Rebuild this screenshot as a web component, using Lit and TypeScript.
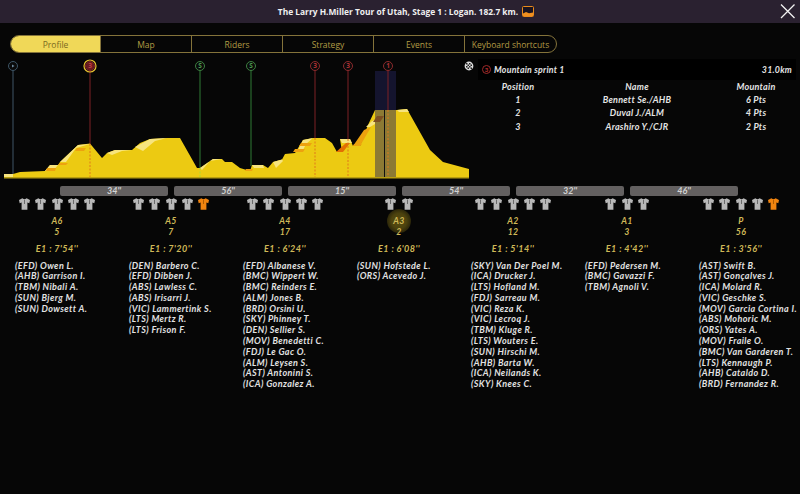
import { LitElement, html, css, svg } from "lit";
import { customElement } from "lit/decorators.js";

const TABS = ["Profile", "Map", "Riders", "Strategy", "Events", "Keyboard shortcuts"];
const GAPS = ["34''", "56''", "15''", "54''", "32''", "46''"];

interface Group { label: string; count: number; time: string; shirts: number; orange?: boolean; glow?: boolean; names: string[]; }

const GROUPS: Group[] = [
  { label: "A6", count: 5, time: "E1 : 7'54''", shirts: 5, names: ["(EFD) Owen L.", "(AHB) Garrison I.", "(TBM) Nibali A.", "(SUN) Bjerg M.", "(SUN) Dowsett A."] },
  { label: "A5", count: 7, time: "E1 : 7'20''", shirts: 4, orange: true, names: ["(DEN) Barbero C.", "(EFD) Dibben J.", "(ABS) Lawless C.", "(ABS) Irisarri J.", "(VIC) Lammertink S.", "(LTS) Mertz R.", "(LTS) Frison F."] },
  { label: "A4", count: 17, time: "E1 : 6'24''", shirts: 5, names: ["(EFD) Albanese V.", "(BMC) Wippert W.", "(BMC) Reinders E.", "(ALM) Jones B.", "(BRD) Orsini U.", "(SKY) Phinney T.", "(DEN) Sellier S.", "(MOV) Benedetti C.", "(FDJ) Le Gac O.", "(ALM) Leysen S.", "(AST) Antonini S.", "(ICA) Gonzalez A."] },
  { label: "A3", count: 2, time: "E1 : 6'08''", shirts: 2, glow: true, names: ["(SUN) Hofstede L.", "(ORS) Acevedo J."] },
  { label: "A2", count: 12, time: "E1 : 5'14''", shirts: 5, names: ["(SKY) Van Der Poel M.", "(ICA) Drucker J.", "(LTS) Hofland M.", "(FDJ) Sarreau M.", "(VIC) Reza K.", "(VIC) Lecroq J.", "(TBM) Kluge R.", "(LTS) Wouters E.", "(SUN) Hirschi M.", "(AHB) Barta W.", "(ICA) Neilands K.", "(SKY) Knees C."] },
  { label: "A1", count: 3, time: "E1 : 4'42''", shirts: 3, names: ["(EFD) Pedersen M.", "(BMC) Gavazzi F.", "(TBM) Agnoli V."] },
  { label: "P", count: 56, time: "E1 : 3'56''", shirts: 4, orange: true, names: ["(AST) Swift B.", "(AST) Gonçalves J.", "(ICA) Molard R.", "(VIC) Geschke S.", "(MOV) Garcia Cortina I.", "(ABS) Mohoric M.", "(ORS) Yates A.", "(MOV) Fraile O.", "(BMC) Van Garderen T.", "(LTS) Kennaugh P.", "(AHB) Cataldo D.", "(BRD) Fernandez R."] },
];

const RESULTS = [
  ["1", "Bennett Se./AHB", "6 Pts"],
  ["2", "Duval J./ALM", "4 Pts"],
  ["3", "Arashiro Y./CJR", "2 Pts"],
];

const PROFILE = "M4 177 L4 174 L13 174 L20 172 L45 171 L50 165 L58 165 L60 162 L78 145 L90 143.5 L102 158 L107 153 L115 150 L132 150 L140 143 L150 139 L167 138 L180 138 L197 168 L200 168 L213 159 L222 159 L225 162 L232 162 L240 168 L250 171 L252 165 L263 165 L268 168 L273 162 L282 159.5 L285 154 L295 153 L303 140 L313 138 L325 138 L332 143 L337 152 L342 152 L340 139 L350 139 L353 146 L360 146 L368 125 L375 110 L397 110 L407 109 L430 150 L443 162 L469 169 L469 177 Z";

const LIGHT = [
  "4,174 13,174 13,177 4,177",
  "45,171 50,165 58,165 53,171",
  "60,162 78,145 90,144 76,148 66,162",
  "107,153 115,150 132,150 122,151 112,155",
  "135,147 150,139 167,138 155,141 143,151",
  "200,168 213,159 222,159 210,161 202,170",
  "252,165 263,165 264,168 254,168",
  "273,162 282,159.5 283,161 276,168",
  "298,150 303,140 313,138 306,144 303,150",
  "340,139 350,139 352,143 342,143",
  "366,127 372,121 375,120 375,124 370,127",
  "397,110 407,109 409,112 399,112",
];
const ORANGE = [
  "47,168 56,168 55,171 46,171",
  "60,163 68,163 66,165 58,165",
  "77,148 86,148 84,151 75,151",
  "301,143 312,143 310,146 299,146",
  "295,149 305,149 303,152 293,152",
  "246,169 253,169 252,171 245,171",
  "353,146 364,130 371,127 360,146",
  "354,144 362,144 360,146 353,146",
];
const DARK_ORANGE = ["336,152 346,143 350,143 343,152 338,152"];

interface Marker { x: number; kind: "start" | "mtn" | "sprint"; text: string; }
const MARKERS: Marker[] = [
  { x: 13, kind: "start", text: "" },
  { x: 90, kind: "mtn", text: "3" },
  { x: 200, kind: "sprint", text: "S" },
  { x: 251, kind: "sprint", text: "S" },
  { x: 315, kind: "mtn", text: "3" },
  { x: 348, kind: "mtn", text: "3" },
  { x: 388, kind: "mtn", text: "1" },
];
const COLORS = { start: "#3e5566", mtn: "#7c2024", sprint: "#2f7a35" };
const SURFACE_Y: Record<number, number> = { 13: 174, 90: 144, 200: 168, 251: 166, 315: 138, 348: 139, 388: 110 };

@customElement("app-root")
export class AppRoot extends LitElement {
  static styles = css`
    :host { display: block; width: 800px; height: 494px; background: #060606; overflow: hidden; font-family: "Open Sans", sans-serif; color: #e8e8e8; }
    .top { height: 23px; background: #2a2130; display: grid; grid-template-columns: 1fr auto 1fr; align-items: center; }
    .title { margin-left: 12px; font-size: 8.4px; font-weight: 700; color: #f0f0f0; display: flex; align-items: center; gap: 4px; white-space: nowrap; }
    .close { justify-self: end; margin-right: 4px; display: block; }
    .tabs { display: flex; width: 547px; height: 18px; margin: 12px 0 0 10px; box-sizing: border-box; border: 1px solid #84733a; border-radius: 9px; overflow: hidden; }
    .tab { flex: 0 0 91px; box-sizing: border-box; display: flex; align-items: center; justify-content: center; font-size: 8.5px; color: #b29c45; border-left: 1px solid #84733a; white-space: nowrap; }
    .tab:first-child { flex-basis: 89px; border-left: 0; background: #f0d858; color: #7a6a20; }
    .tab:last-child { flex: 1; }
    .middle { display: flex; height: 129px; margin-top: 3px; }
    .profile { display: block; flex: none; }
    .info { width: 318px; margin: 3px 0 0 3px; font-family: Lato, sans-serif; font-style: italic; font-weight: 700; font-size: 9px; letter-spacing: 0.25px; color: #e4e4e4; }
    .info-head { height: 21px; background: #000; display: flex; align-items: center; justify-content: space-between; padding: 0 4px; font-size: 8.75px; }
    .info-name { display: flex; align-items: center; gap: 3px; }
    .badge { width: 9px; height: 9px; box-sizing: border-box; border: 1px solid #a02a2a; border-radius: 50%; color: #c03030; font-size: 6px; line-height: 7px; text-align: center; font-style: normal; letter-spacing: 0; }
    .grid { display: grid; grid-template-columns: 80px 158px 80px; grid-auto-rows: 13.2px; text-align: center; align-items: center; }
    .bars { display: flex; gap: 6px; padding-left: 60px; margin-top: 1px; }
    .bar { width: 108px; height: 10px; background: #636060; border-radius: 2px; font-family: Lato, sans-serif; font-size: 9px; font-style: italic; font-weight: 700; line-height: 10px; text-align: center; color: #d2d2d2; }
    .cols { display: grid; grid-template-columns: repeat(7, 114px); margin-top: 1px; }
    .col { display: flex; flex-direction: column; }
    .shirts { display: flex; justify-content: center; gap: 5.3px; height: 14px; align-items: center; }
    .shirt { display: block; width: 11px; height: 12px; fill: #b8b8b8; }
    .shirt.orange { fill: #f08410; }
    .shirt .seam { stroke: #6a6a6a; stroke-width: 1; fill: none; }
    .shirt.orange .seam { stroke: #b05c00; }
    .lab { position: relative; z-index: 1; font-family: Lato, sans-serif; color: #d0b958; font-style: italic; font-weight: 700; font-size: 8.75px; text-align: center; line-height: 10.5px; letter-spacing: 0.3px; }
    .lab.first { margin-top: 5px; }
    .lab.glow { z-index: 0; }
    .lab.glow::before { content: ""; position: absolute; z-index: -1; left: 50%; top: 50%; width: 24px; height: 24px; margin: -12px 0 0 -12px; border-radius: 50%; background: radial-gradient(circle, #5a4e10 0%, #4c420e 45%, rgba(60,50,10,0) 100%); }
    .time { margin-top: 6px; letter-spacing: 0.45px; font-size: 9px; line-height: 12px; }
    .names { list-style: none; margin: 5.5px 0 0; padding: 0 0 0 15px; font-family: Lato, sans-serif; font-size: 9px; font-style: italic; font-weight: 700; line-height: 10.8px; color: #e2e2e2; white-space: nowrap; letter-spacing: 0.4px; }
  `;

  private shirt(orange = false) {
    return html`<svg class="shirt ${orange ? "orange" : ""}" viewBox="0 0 11 12">
      <path d="M3.4 0.3 L4.6 1 L6.4 1 L7.6 0.3 L11 2 L10.3 5.2 L8.4 4.6 L8.4 11.8 L2.6 11.8 L2.6 4.6 L0.7 5.2 L0 2 Z" />
      <path class="seam" d="M5.5 1.5 V6" />
    </svg>`;
  }

  private profile() {
    return html`<svg class="profile" width="475" height="129" viewBox="0 56 475 129">
      <rect x="375" y="71" width="21" height="39" fill="#14142e" />
      ${MARKERS.map((m) => svg`
        <line x1=${m.x} x2=${m.x} y1="71" y2=${SURFACE_Y[m.x]} stroke=${COLORS[m.kind]} stroke-width="1" />
      `)}
      <path d=${PROFILE} fill="#ecca12" />
      ${LIGHT.map((p) => svg`<polygon points=${p} fill="#f7e47e" />`)}
      ${ORANGE.map((p) => svg`<polygon points=${p} fill="#eda20e" />`)}
      ${DARK_ORANGE.map((p) => svg`<polygon points=${p} fill="#e36f02" />`)}
      <rect x="375" y="110" width="21" height="67" fill="#8c7a34" />
      <polygon points="373,122 377,116 384,116 380,122" fill="#7c4f22" />
      <line x1="384.5" x2="384.5" y1="110" y2="178" stroke="#111" stroke-width="1" />
      <rect x="4" y="177" width="465" height="1.5" fill="#b89e10" />
      ${[90, 315, 348, 388, 200].map((x) => svg`
        <line x1=${x} x2=${x} y1=${SURFACE_Y[x]} y2="177" stroke=${x === 200 ? "#a8d838" : "#e0781a"} stroke-width="1" stroke-dasharray="2 1.5" />
      `)}
      ${MARKERS.map((m) => svg`
        <circle cx=${m.x} cy="66" r="4.5" fill="#0a0a0a" stroke=${m.kind === "start" ? "#3e5566" : m.kind === "mtn" ? "#8c2a2c" : "#3c8040"} stroke-width="1" />
        ${m.text
          ? svg`<text x=${m.x} y="68.3" text-anchor="middle" font-size="6.5" font-weight="700" fill=${m.kind === "mtn" ? "#b03034" : "#4a9a50"} font-family="Open Sans">${m.text}</text>`
          : svg`<polygon points="${m.x - 1},64.5 ${m.x + 1.5},66 ${m.x - 1},67.5" fill="#6c8aa0" />`}
      `)}
      <circle cx="90" cy="66" r="6" fill="none" stroke="#e8c030" stroke-width="1.2" />
      <circle cx="90" cy="66" r="4.2" fill="#6a1a20" />
      <text x="90" y="68.3" text-anchor="middle" font-size="6.5" font-weight="700" fill="#c04040" font-family="Open Sans">3</text>
      <circle cx="469" cy="66" r="4.4" fill="#dcdcdc" />
      <g fill="#222">
        <rect x="466" y="63" width="1.5" height="1.5" /><rect x="469" y="63" width="1.5" height="1.5" />
        <rect x="467.5" y="64.5" width="1.5" height="1.5" /><rect x="470.5" y="64.5" width="1.5" height="1.5" />
        <rect x="466" y="66" width="1.5" height="1.5" /><rect x="469" y="66" width="1.5" height="1.5" />
        <rect x="467.5" y="67.5" width="1.5" height="1.5" /><rect x="470.5" y="67.5" width="1.5" height="1.5" />
      </g>
    </svg>`;
  }

  render() {
    return html`
      <div class="top">
        <span></span>
        <div class="title">
          <span>The Larry H.Miller Tour of Utah, Stage 1 : Logan. 182.7 km.</span>
          <svg width="12" height="11" viewBox="0 0 12 11">
            <rect x="0.5" y="0.5" width="11" height="10" rx="1" fill="#1a1420" stroke="#e88a1c" />
            <path d="M1 10 V7.5 L4 6 L7 7.2 L11 6.5 V10 Z" fill="#f09020" />
          </svg>
        </div>
        <svg class="close" width="17" height="17" viewBox="0 0 17 17">
          <path d="M2 1.5 L15.5 15 M15.5 1.5 L2 15" stroke="#f2f2f2" stroke-width="1.3" fill="none" />
        </svg>
      </div>
      <div class="tabs">${TABS.map((t) => html`<div class="tab">${t}</div>`)}</div>
      <div class="middle">
        ${this.profile()}
        <div class="info">
          <div class="info-head">
            <div class="info-name"><span class="badge">3</span><span>Mountain sprint 1</span></div>
            <span>31.0km</span>
          </div>
          <div class="grid">
            <span>Position</span><span>Name</span><span>Mountain</span>
            ${RESULTS.map((r) => r.map((c) => html`<span>${c}</span>`))}
          </div>
        </div>
      </div>
      <div class="bars">${GAPS.map((g) => html`<div class="bar">${g}</div>`)}</div>
      <div class="cols">
        ${GROUPS.map((g) => html`
          <div class="col">
            <div class="shirts">
              ${Array.from({ length: g.shirts }, () => this.shirt())}
              ${g.orange ? this.shirt(true) : ""}
            </div>
            <div class="lab first ${g.glow ? "glow" : ""}">${g.label}</div>
            <div class="lab">${g.count}</div>
            <div class="lab time">${g.time}</div>
            <ul class="names">${g.names.map((n) => html`<li>${n}</li>`)}</ul>
          </div>
        `)}
      </div>
    `;
  }
}
